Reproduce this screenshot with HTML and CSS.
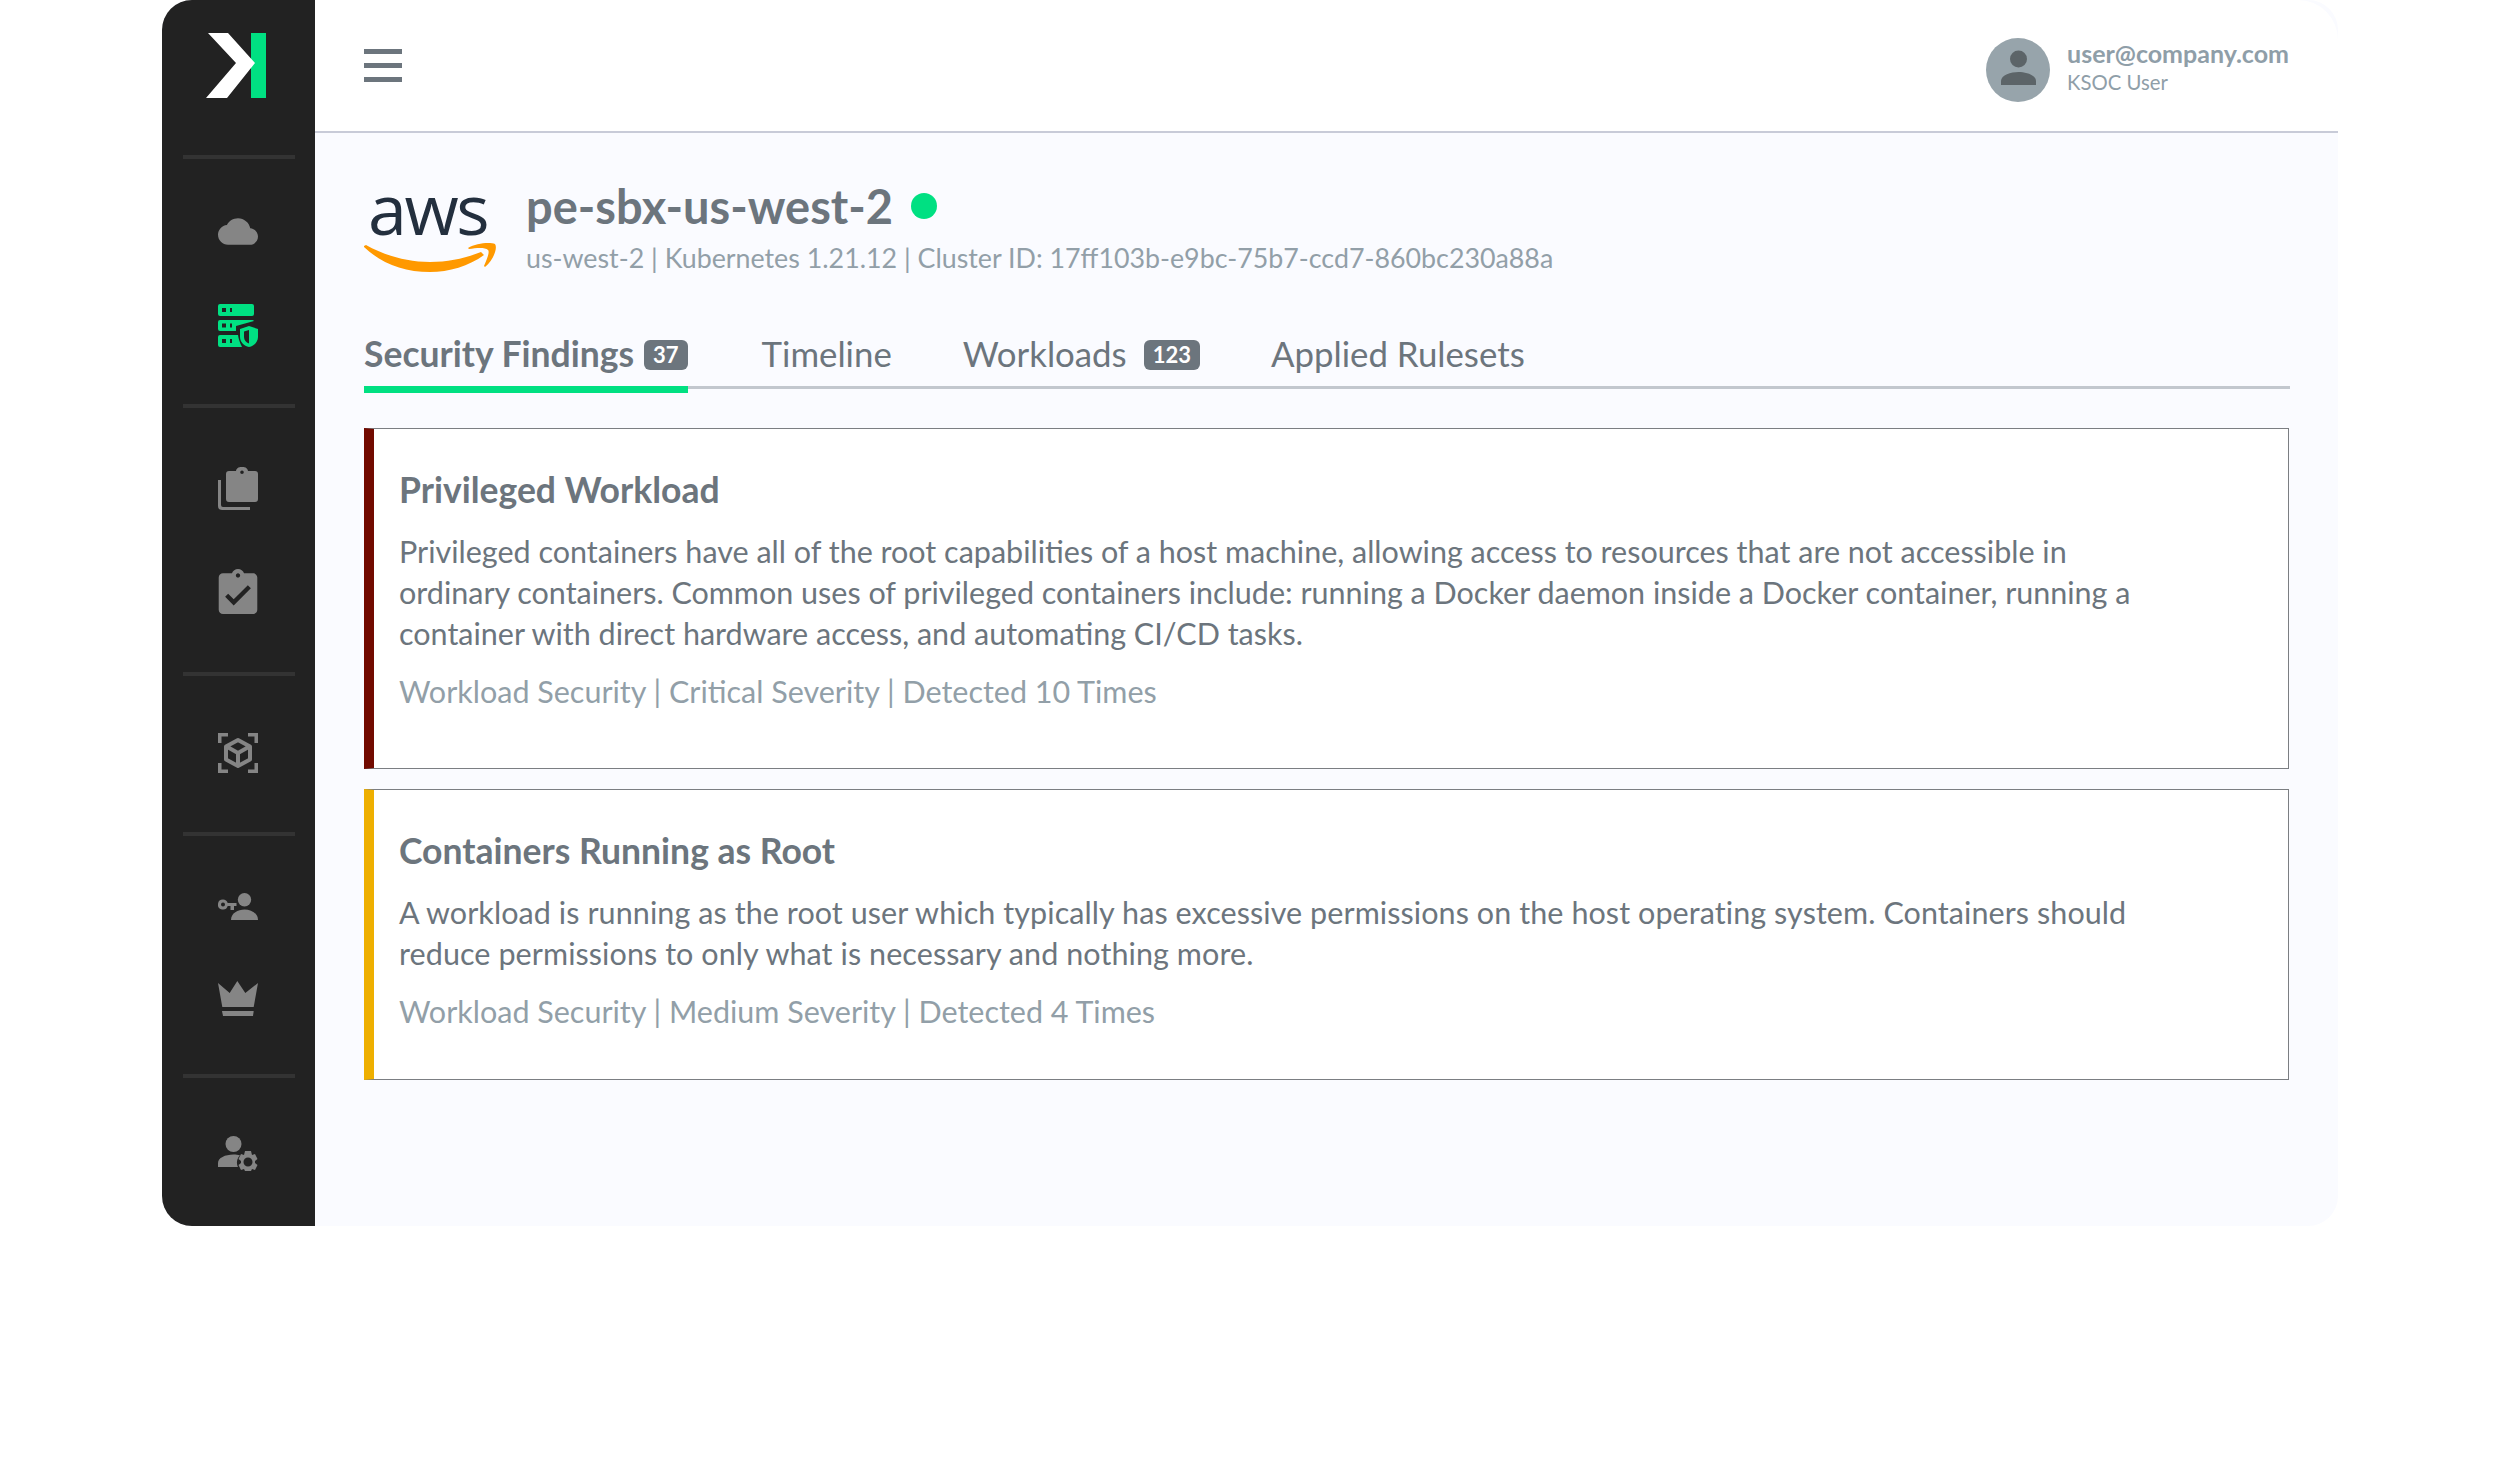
FILE: index.html
```html
<!DOCTYPE html>
<html lang="en">
<head>
<meta charset="utf-8">
<title>KSOC</title>
<link rel="stylesheet" href="styles.css">
</head>
<body>
<div class="app">
  <aside class="sidebar">
    <svg class="logo" viewBox="0 0 60 65"><rect fill="#00e082" x="45" width="15" height="65"/><path fill="#fff" d="M2 0H22L49 30 21 65H0L30 30Z"/></svg>
    <div class="divider d-first"></div>
    <div class="group g-a">
      <svg class="icon cloud" viewBox="0 4 24 16"><path d="M19.35 10.04C18.67 6.59 15.64 4 12 4 9.11 4 6.6 5.64 5.35 8.04 2.34 8.36 0 10.91 0 14c0 3.31 2.69 6 6 6h13c2.76 0 5-2.24 5-5 0-2.64-2.05-4.78-4.65-4.96z"/></svg>
      <svg class="icon servers" viewBox="0 0 40 43"><path fill="#00e082" fill-rule="evenodd" d="M2 0H34a2 2 0 0 1 2 2V10a2 2 0 0 1-2 2H2a2 2 0 0 1-2-2V2A2 2 0 0 1 2 0ZM4 4V8H8V4ZM12 4V8H14V4ZM2 16H34a2 2 0 0 1 2 1L18 22V27H2a2 2 0 0 1-2-2V18a2 2 0 0 1 2-2ZM4 19.5V23.5H8V19.5ZM12 19.500V23.500H14V19.500ZM2 31H20C20.500 35 22 39 24 43H2a2 2 0 0 1-2-2V33a2 2 0 0 1 2-2ZM4 35V39H8V35ZM12 35V39H14V35Z"/><path fill="#00e082" fill-rule="evenodd" d="M31 22L40 25V33C40 38 36 42 31 43 26 42 22 38 22 33V25ZM31 26L26 27.500V33C26 36 28 38.500 31 39.500Z"/></svg>
    </div>
    <div class="divider d-b"></div>
    <div class="group g-b">
      <svg class="icon clip" viewBox="0 0 40 43"><path fill-rule="evenodd" d="M11 4H18C18.500 1.500 20 0 24 0S29.500 1.500 30 4H37a3 3 0 0 1 3 3V32a3 3 0 0 1-3 3H11a3 3 0 0 1-3-3V7a3 3 0 0 1 3-3ZM24 3.500a1.800 1.800 0 1 0 0 3.600 1.800 1.800 0 0 0 0-3.600Z"/><path d="M0 13H3V38a2 2 0 0 0 2 2H32V43H4a4 4 0 0 1-4-4Z"/></svg>
      <svg class="icon check" viewBox="3 1 18 21"><path d="M19 3h-4.180C14.400 1.840 13.300 1 12 1c-1.300 0-2.400.840-2.820 2H5c-1.100 0-2 .900-2 2v15c0 1.100.900 2 2 2h14c1.100 0 2-.900 2-2V5c0-1.100-.900-2-2-2zm-7 0c.550 0 1 .450 1 1s-.450 1-1 1-1-.450-1-1 .450-1 1-1zm-2 15l-4-4 1.410-1.410L10 15.170l6.590-6.590L18 10l-8 8z"/></svg>
    </div>
    <div class="divider d-c"></div>
    <div class="group g-c">
      <svg class="icon cube" viewBox="0 0 40 40"><g fill="none" stroke="#858585"><path stroke-width="3.500" d="M10 1.750H1.750V10M30 1.750H38.250V10M10 38.250H1.750V30M30 38.250H38.250V30"/><path stroke-width="4" stroke-linejoin="round" d="M20 7L32 13.500V26.500L20 33 8 26.500V13.500ZM8.500 13.500L20 20 31.500 13.500M20 20V33"/></g></svg>
    </div>
    <div class="divider d-d"></div>
    <div class="group g-d">
      <svg class="icon keyuser" viewBox="0 0 40 27"><circle cx="26.500" cy="6.700" r="6.700"/><path d="M13 27C13 20 20 16.500 26.500 16.500S40 20 40 27Z"/><path fill-rule="evenodd" d="M5 6.500a5 5 0 0 1 4.700 3.500H18.500V13H16V17H12.500V13H9.700A5 5 0 1 1 5 6.500ZM5 9.500a2 2 0 1 0 0 4 2 2 0 0 0 0-4Z"/></svg>
      <svg class="icon crown" viewBox="0 0 40 35"><path d="M0 2L11.700 12 19.300 0 27.300 12 40 2 35.700 26H4.300Z"/><path d="M4 30H35.700L35 35H5Z"/></svg>
    </div>
    <div class="divider d-e"></div>
    <div class="group g-e">
      <svg class="icon usergear" viewBox="0 0 40 35"><circle cx="15.500" cy="8" r="8"/><path d="M0 31V27C0 22 7 18.500 15.500 18.500C18 18.500 20 18.800 22 19.500 19 22 18 27 20 31Z"/><path fill-rule="evenodd" d="M28 15H34L35 19 38 18 40.500 23 38 25V27L40.500 29 38 34 35 33 34 35H28L27 33 24 34 21.500 29 24 27V25L21.500 23 24 18 27 19ZM31 21.500a4.500 4.500 0 1 0 0 9 4.500 4.500 0 0 0 0-9Z" transform="translate(-1 0)"/></svg>
    </div>
  </aside>
  <div class="main">
    <header class="topbar">
      <div class="burger"><span></span><span></span><span></span></div>
      <div class="user">
        <svg class="avatar" viewBox="0 0 64 64"><circle cx="32" cy="32" r="32" fill="#97a4ab"/><circle cx="32.500" cy="21" r="8.500" fill="#5c6468"/><path fill="#5c6468" d="M15 47V43C15 37 25 34 32.500 34S50 37 50 43V47Z"/></svg>
        <div class="user-text">
          <div class="email">user@company.com</div>
          <div class="role">KSOC User</div>
        </div>
      </div>
    </header>
    <section class="content">
      <div class="cluster">
        <div class="aws">
          <span class="aws-word">aws</span>
          <svg class="aws-smile" viewBox="0 0 133 30"><path fill="#f90" d="M0 4L2 3C20 13 42 20 66 20 85 20 102 16 117 10L120 13C105 24 85 30 66 30 40 30 18 22 0 5Z"/><path fill="#f90" d="M104 6C112 1 126 0 131 2 134 6 129 19 121 25L120 24C123 17 126 10 124 8 121 5 112 6 105 7Z"/></svg>
        </div>
        <div class="cluster-text">
          <div class="cluster-title"><h1>pe-sbx-us-west-2</h1><span class="dot"></span></div>
          <p class="cluster-meta">us-west-2 | Kubernetes 1.21.12 | Cluster ID: 17ff103b-e9bc-75b7-ccd7-860bc230a88a</p>
        </div>
      </div>
      <nav class="tabs">
        <div class="tab active"><span>Security Findings</span><b class="badge">37</b></div>
        <div class="tab"><span>Timeline</span></div>
        <div class="tab"><span>Workloads</span><b class="badge badge-wide">123</b></div>
        <div class="tab"><span>Applied Rulesets</span></div>
      </nav>
      <article class="card critical">
        <h2>Privileged Workload</h2>
        <p class="desc">Privileged containers have all of the root capabilities of a host machine, allowing access to resources that are not accessible in<br>ordinary containers. Common uses of privileged containers include: running a Docker daemon inside a Docker container, running a<br>container with direct hardware access, and automating CI/CD tasks.</p>
        <p class="meta">Workload Security | Critical Severity | Detected 10 Times</p>
      </article>
      <article class="card medium">
        <h2>Containers Running as Root</h2>
        <p class="desc">A workload is running as the root user which typically has excessive permissions on the host operating system. Containers should<br>reduce permissions to only what is necessary and nothing more.</p>
        <p class="meta">Workload Security | Medium Severity | Detected 4 Times</p>
      </article>
    </section>
  </div>
</div>
</body>
</html>
```
FILE: styles.css
```css
* { box-sizing: border-box; }
html, body { margin: 0; padding: 0; background: #fff; }
body { font-family: "Lato", "Noto Sans", sans-serif; width: 2500px; height: 1460px; overflow: hidden; }
h1, h2, p { margin: 0; }

.app { margin-left: 162px; width: 2176px; height: 1226px; display: flex; border-radius: 30px; overflow: hidden; background: #fafbff; }

.sidebar { width: 153px; flex: none; background: #222; display: flex; flex-direction: column; align-items: center; padding-top: 33px; }
.logo { width: 60px; height: 65px; margin-left: -5px; display: block; flex: none; }
.divider { width: 112px; height: 4px; background: #333; flex: none; }
.d-first { margin-top: 57px; }
.group { display: flex; flex-direction: column; align-items: center; }
.icon { width: 40px; display: block; fill: #858585; flex: none; margin-left: -1px; }
.g-a { padding: 59px 0 57px; gap: 59px; }
.cloud { height: 27px; }
.servers { height: 43px; }
.g-b { padding: 59px 0 58px; gap: 59px; }
.clip { height: 43px; }
.check { height: 45px; }
.g-c { padding: 57px 0 59px; }
.cube { height: 40px; }
.g-d { padding: 57px 0 58px; gap: 61px; }
.keyuser { height: 27px; }
.crown { height: 35px; }
.g-e { padding: 58px 0; }
.usergear { height: 35px; }

.main { flex: 1; display: flex; flex-direction: column; min-width: 0; }
.topbar { height: 133px; flex: none; background: #fff; border-bottom: 2px solid #c8cbd8; border-top-right-radius: 40px; display: flex; align-items: center; justify-content: space-between; padding: 0 49px 0 49px; }
.burger { width: 38px; display: flex; flex-direction: column; gap: 9px; }
.burger span { display: block; height: 5px; background: #6c757d; }
.user { display: flex; align-items: center; gap: 17px; margin-top: 8px; }
.avatar { width: 64px; height: 64px; display: block; }
.user-text { padding-bottom: 4px; }
.email { font-size: 25px; font-weight: 700; color: #8f9ea8; line-height: 26px; }
.role { font-size: 20.3px; color: #8f9ea8; line-height: 28px; margin-top: 2px; }

.content { padding: 48px 48px 0 49px; display: flex; flex-direction: column; }
.cluster { display: flex; gap: 30px; height: 92px; }
.aws { width: 132px; flex: none; display: flex; flex-direction: column; align-items: flex-start; margin-top: -1px; }
.aws-word { font-family: "Open Sans", sans-serif; font-weight: 500; font-size: 70px; line-height: 56px; color: #232f3e; margin: 0 0 0 4px; letter-spacing: -2.5px; }
.aws-smile { width: 133px; height: 30px; display: block; margin-top: 6px; }
.cluster-title { display: flex; align-items: center; gap: 18px; height: 50px; }
h1 { font-size: 47px; font-weight: 700; color: #6c757d; line-height: 50px; }
.dot { width: 26px; height: 26px; border-radius: 50%; background: #00e082; }
.cluster-meta { font-size: 26.8px; color: #929fa8; line-height: 32px; margin-top: 11px; }

.tabs { display: flex; gap: 71px; margin-top: 53px; border-bottom: 3px solid #c2c7ce; height: 63px; }
.tab { display: flex; gap: 10px; align-items: flex-start; height: 63px; font-size: 34.8px; line-height: 42px; color: #6c757d; padding-top: 7px; }
.tab.active { font-size: 35.5px; font-weight: 700; border-bottom: 7px solid #00e082; height: 67px; margin-right: 3px; }
.badge { font-size: 22px; font-weight: 700; color: #fff; background: #6c757d; border-radius: 6px; padding: 2px 9px; line-height: 26px; margin-top: 7px; }
.badge-wide { margin-left: 7px; }

.card { background: #fff; border: 1px solid #7b7e82; border-left-width: 10px; padding: 39px 24px 0 25px; width: 1925px; flex: none; }
.critical { border-left-color: #720a00; margin-top: 39px; height: 341px; }
.medium { border-left-color: #eeaf00; margin-top: 20px; height: 291px; }
.card h2 { font-size: 35.5px; font-weight: 700; color: #6c757d; line-height: 44px; }
.desc { font-size: 30.5px; color: #6c757d; line-height: 41px; margin-top: 19px; }
.medium .desc { letter-spacing: .08px; }
.meta { font-size: 30.5px; color: #929fa8; line-height: 41px; margin-top: 17px; }
```
